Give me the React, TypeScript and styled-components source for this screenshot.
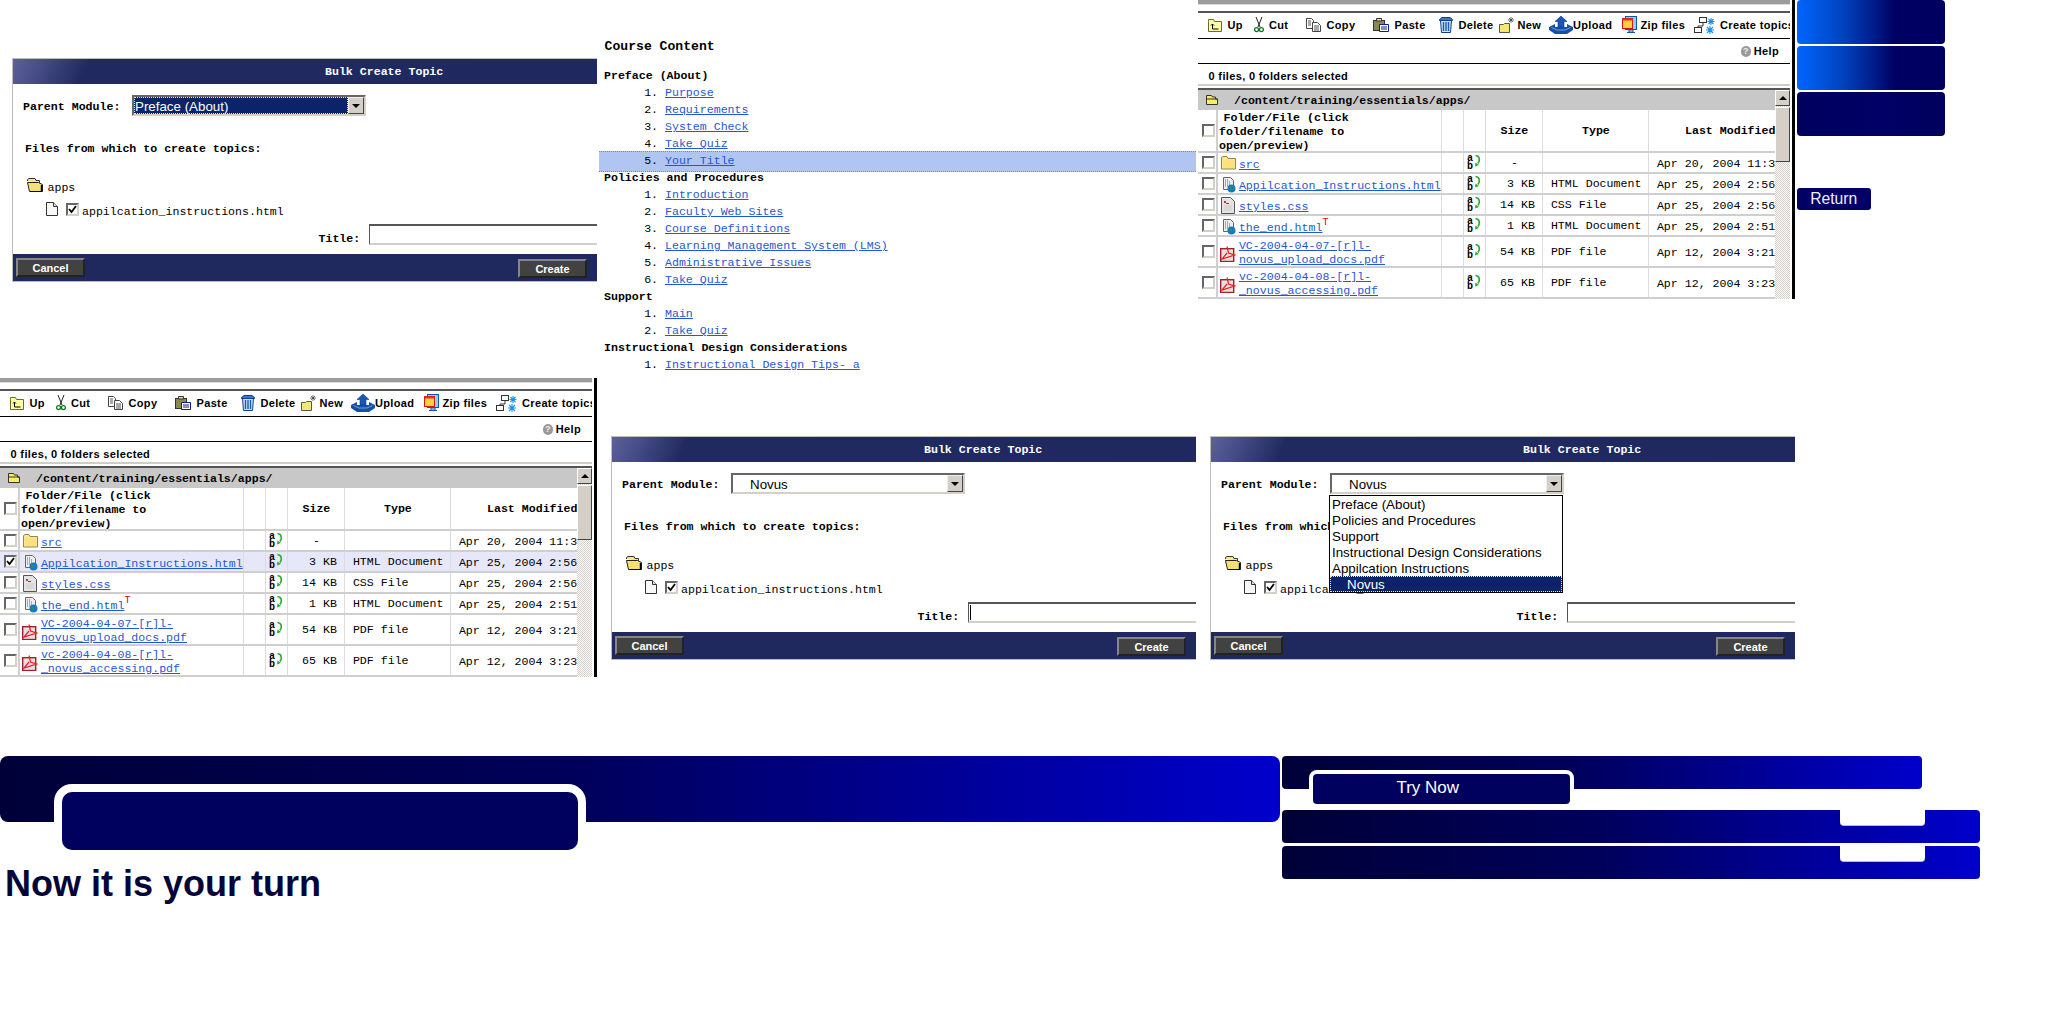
import React from 'react';
import styled, { createGlobalStyle } from 'styled-components';

const Global = createGlobalStyle`
  html, body { margin: 0; padding: 0; background: #fff; }
  #root { width: 2048px; height: 1024px; overflow: hidden; }
`;

const MONO = `"Liberation Mono", "Courier New", monospace`;
const SANS = `"Liberation Sans", Arial, sans-serif`;

const Canvas = styled.div`
  position: relative;
  width: 2048px;
  height: 1024px;
  background: #fff;
  overflow: hidden;
  font-family: ${MONO};
  font-size: 11.6px;
  color: #000;
`;

/* each captured picture is a window placed freely on the canvas */
const Placed = styled.div<{ $x: number; $y: number }>`
  position: absolute;
  left: ${p => p.$x}px;
  top: ${p => p.$y}px;
`;

/* ---------- Icons ---------- */
const FolderUpIcon = () => (
  <svg width="14" height="13" viewBox="0 0 14 13">
    <path d="M.5 2.5V.5h5l1 2h7v10H.5z" fill="#ffffa8" stroke="#6a6a20" />
    <path d="M4.5 5v5h6M3 6.5 4.5 5 6 6.5" stroke="#000" fill="none" />
  </svg>
);
const ScissorsIcon = () => (
  <svg width="10" height="16" viewBox="0 0 10 16">
    <path d="M2 0l4 10M8 0 4 10" stroke="#222" fill="none" />
    <circle cx="2.6" cy="12.6" r="2" stroke="#0a7a18" strokeWidth="1.3" fill="#fff" />
    <circle cx="7.4" cy="12.6" r="2" stroke="#0a7a18" strokeWidth="1.3" fill="#fff" />
  </svg>
);
const CopyIcon = () => (
  <svg width="15" height="14" viewBox="0 0 15 14">
    <path d="M.5.5h5l2 2v8H.5z" fill="#fff" stroke="#444" />
    <path d="M6.5 4.5h5l3 3v6h-8z" fill="#fff" stroke="#444" />
    <path d="M2 3h3M2 5h3M2 7h3M8 8h5M8 10h5M8 12h5" stroke="#555" />
  </svg>
);
const PasteIcon = () => (
  <svg width="16" height="14" viewBox="0 0 16 14">
    <rect x=".5" y="2.5" width="11" height="10" fill="#8a8a50" stroke="#333" />
    <path d="M3.5 3V.5h5V3z" fill="#f0e080" stroke="#333" />
    <path d="M6.5 6.5h9v7h-9z" fill="#fff" stroke="#0a1a90" />
    <path d="M8 9h6M8 11h6" stroke="#0a1a90" />
  </svg>
);
const TrashIcon = () => (
  <svg width="14" height="16" viewBox="0 0 14 16">
    <path d="M.5 2.5 3 .5h8l2.5 2v1H.5z" fill="#3a78c8" stroke="#0d3f88" />
    <path d="M1.5 3.5h11l-1 12h-9z" fill="#cfe0f6" stroke="#0d3f88" />
    <path d="M4.5 5v9M7 5v9M9.5 5v9" stroke="#1c5cb0" strokeWidth="1.4" />
  </svg>
);
const NewIcon = () => (
  <svg width="16" height="16" viewBox="0 0 16 16">
    <path d="M.5 7.5h4l1-1h5v9h-10z" fill="#f2ea70" stroke="#555" />
    <path d="M12 0v6M9 3h6M10 1l4 4M14 1l-4 4" stroke="#333" strokeWidth=".7" />
  </svg>
);
const UploadIcon = () => (
  <svg width="24" height="18" viewBox="0 0 24 18">
    <path d="M0 11l6-3v3h12V8l6 3v3l-6 4H6l-6-4z" fill="#164fa6" />
    <path d="M2.5 11.500 8 14h8l5.500-2.500" stroke="#6f9fdc" fill="none" />
    <path d="M12 0l6 5.500h-3V11H9V5.500H6z" fill="#1a58b4" stroke="#0d3a84" strokeWidth=".6" />
  </svg>
);
const ZipIcon = () => (
  <svg width="15" height="18" viewBox="0 0 15 18">
    <rect x="3.5" y=".5" width="11" height="13" fill="#8ed0f0" stroke="#0a5aa8" />
    <rect x=".5" y="2.5" width="10" height="10" fill="#ffd040" stroke="#d01818" />
    <path d="M.5 2.5h10v2H.5z" fill="#e83020" />
    <path d="M7 14h4v2H7zM5 16.500h8" stroke="#0a5aa8" fill="none" />
  </svg>
);
const CreateIcon = () => (
  <svg width="22" height="17" viewBox="0 0 22 17">
    <rect x="5.5" y=".5" width="7" height="5" fill="#fff" stroke="#333" />
    <rect x=".5" y="10.500" width="7" height="5" fill="#fff" stroke="#333" />
    <path d="M9 6v3H4v1" stroke="#333" fill="none" />
    <path d="M17 1v7M13.500 4.500h7M14.500 2l5 5M19.500 2l-5 5M16 9v8M12 13h8M13 10l6 6M19 10l-6 6" stroke="#1a90f0" strokeWidth="1.1" />
  </svg>
);
const HelpIconBox = styled.span`
  display: inline-flex;
  width: 10px;
  height: 11px;
  border-radius: 5px;
  align-items: center;
  justify-content: center;
  background: #9a9a9a;
  color: #eee;
  font: bold 9px ${SANS};
  letter-spacing: 0;
`;
const FolderOpenIcon = () => (
  <svg width="16" height="14" viewBox="0 0 16 14">
    <path d="M.5 3V1.500L2 .5h6l1 2h3.500V5" fill="#f6e68a" stroke="#333" />
    <path d="M.5 4.500h11l4 2v7H2.500z" fill="#f5e070" stroke="#222" />
    <path d="M14.500 7v7H3" stroke="#000" fill="none" strokeWidth="1.400" />
  </svg>
);
const SmallOpenFolderIcon = () => (
  <svg width="12" height="10" viewBox="0 0 12 10">
    <path d="M.5 2V.5h5l1 1.500h3v2h2v5.500h-11z" fill="#f7ee60" stroke="#333" />
    <path d="M.5 4h11" stroke="#333" />
  </svg>
);
const FolderClosedIcon = () => (
  <svg width="15" height="14" viewBox="0 0 15 14">
    <path d="M.5 13V1.500L2 .5h4l1 2h7.500V13z" fill="#fde890" stroke="#8a8a50" />
    <path d="M2 4h11v8H2z" fill="#ffdf80" />
  </svg>
);
const DocIcon = () => (
  <svg width="12" height="14" viewBox="0 0 12 14">
    <path d="M.5.5h7l4 4v9H.5z" fill="#f8f8f8" stroke="#333" />
    <path d="M7.500.5v4h4" fill="#ddd" stroke="#333" />
  </svg>
);
const HtmlIcon = () => (
  <svg width="15" height="16" viewBox="0 0 15 16">
    <path d="M2.500.5h7l3 3v9h-10z" fill="#eee" stroke="#666" />
    <path d="M4 3h4M4 5h6M4 7h6M4 9h6" stroke="#666" strokeDasharray="1 1" />
    <circle cx="10.500" cy="11.500" r="4" fill="#1878c8" />
    <path d="M8 9.500l3 1-1 3zM12 9l2 2-2 1z" fill="#2c9a40" />
  </svg>
);
const CssIcon = () => (
  <svg width="14" height="17" viewBox="0 0 14 17">
    <path d="M.5.5h9l4 4v12H.5z" fill="#e4e4e4" stroke="#555" />
    <rect x="3" y="4" width="2" height="2" fill="#c03060" />
    <rect x="5" y="6" width="3" height="1" fill="#3050c0" />
    <path d="M3 9h8M3 11h8M3 13h8" stroke="#ccc" />
  </svg>
);
const PdfIcon = () => (
  <svg width="16" height="16" viewBox="0 0 16 16">
    <rect x=".7" y="2.700" width="13" height="12.800" fill="#e8e0e0" stroke="#a02028" strokeWidth="1.400" />
    <path d="M7 .5 8.500 7 14.500 9 2 13 7 7" fill="none" stroke="#e81c24" strokeWidth="1.200" />
  </svg>
);
const RenameGlyph = styled.svg`
  display: block;
  font-family: ${MONO};
  font-weight: bold;
`;
const RenameIcon = () => (
  <RenameGlyph width="16" height="16" viewBox="0 0 16 16">
    <text x="0" y="7" fontSize="10" fill="#000">a</text>
    <text x="0" y="14.500" fontSize="10" fill="#000">b</text>
    <path d="M8.500 1.500c4 .5 5 4.500 2.500 8" stroke="#30a838" strokeWidth="1.700" fill="none" />
    <path d="M8.500 8.500l3.500 2.500-4 1.500z" fill="#30a838" />
  </RenameGlyph>
);

/* ---------- Checkbox ---------- */
const Box = styled.span`
  display: inline-flex;
  box-sizing: border-box;
  width: 13px;
  height: 13px;
  flex: none;
  background: #fff;
  border: 2px solid;
  border-color: #666 #d4d0c8 #d4d0c8 #666;
  align-items: center;
  justify-content: center;
`;
const Check = ({ on }: { on?: boolean }) => (
  <Box>
    {on && (
      <svg width="9" height="9" viewBox="0 0 9 9">
        <path d="M1 4l2.500 3L8 1" stroke="#000" strokeWidth="1.800" fill="none" />
      </svg>
    )}
  </Box>
);

/* ---------- File browser ---------- */
const Browser = styled.div`
  position: relative;
  width: 592px;
  height: 299px;
  display: flex;
  flex-direction: column;
  overflow: hidden;
`;
const TopStrip = styled.div`
  height: 13px;
  box-sizing: border-box;
  border-top: 4px solid #9c9c9c;
  border-bottom: 2px solid #555;
  box-shadow: inset 0 1px 0 #ddd;
  background: #fff;
  flex: none;
`;
const Toolbar = styled.div`
  height: 26px;
  box-sizing: border-box;
  border-bottom: 1px solid #000;
  display: flex;
  align-items: center;
  padding: 0 0 1px 9.5px;
  flex: none;
  white-space: nowrap;
`;
const ToolItem = styled.span<{ $w: number; $gap: number }>`
  display: inline-flex;
  align-items: center;
  flex: none;
  width: ${p => p.$w}px;
  gap: ${p => p.$gap}px;
  font: bold 11px ${SANS};
  letter-spacing: 0.35px;
`;
const HelpRow = styled.div`
  height: 25px;
  box-sizing: border-box;
  border-bottom: 1px solid #000;
  display: flex;
  align-items: center;
  justify-content: flex-end;
  gap: 3px;
  padding-right: 11px;
  font: bold 11px ${SANS};
  letter-spacing: 0.35px;
  flex: none;
`;
const StatusRow = styled.div`
  height: 20px;
  padding: 3px 0 0 10.5px;
  box-sizing: border-box;
  display: flex;
  align-items: center;
  font: bold 11px ${SANS};
  letter-spacing: 0.35px;
  flex: none;
`;
const StatusRule = styled.div`
  height: 6px;
  box-sizing: border-box;
  border-top: 2px solid #cfcdc6;
  border-bottom: 2px solid #555;
  flex: none;
`;
const TableWrap = styled.div`
  display: flex;
  flex: none;
  height: 209px;
`;
const TableArea = styled.div`
  width: 577px;
  flex: none;
  overflow: hidden;
`;
const PathRow = styled.div`
  height: 20px;
  background: #c8c8c8;
  display: flex;
  align-items: center;
  padding-left: 8px;
  gap: 16px;
  font-weight: bold;
`;
const Row = styled.div<{ $h: number; $sel?: boolean }>`
  width: 600px;
  display: grid;
  grid-template-columns: 20.4px 224px 22px 22px 57px 106px 149px;
  height: ${p => p.$h}px;
  box-sizing: border-box;
  border-bottom: 2px solid #cfcfcf;
  background: ${p => (p.$sel ? '#e6e8fa' : '#fff')};
`;
const Cell = styled.div`
  box-sizing: border-box;
  border-right: 1px solid #dcdcdc;
  display: flex;
  align-items: center;
  min-width: 0;
  white-space: nowrap;
  overflow: hidden;
`;
const CheckCell = styled(Cell)`
  padding-left: 4px;
  border-right: 2px solid #cfcfcf;
`;
const NameCell = styled(Cell)<{ $tall?: boolean }>`
  padding: ${p => (p.$tall ? 2 : 1)}px 0 0 1.5px;
  gap: 2px;
  align-items: ${p => (p.$tall ? 'flex-start' : 'flex-end')};
`;
const IconSlot = styled.span<{ $top: number }>`
  width: 17px;
  flex: none;
  display: flex;
  justify-content: center;
  align-self: flex-start;
  margin-top: ${p => p.$top}px;
`;
const FileLink = styled.a`
  color: #1f57d6;
  text-decoration: underline;
  line-height: 14px;
  white-space: pre;
  display: block;
`;
const Sup = styled.span`
  color: #e00000;
  font-size: 10px;
  line-height: 10px;
  align-self: flex-start;
  margin: 1px 0 0 -2px;
`;
const RenameCell = styled(Cell)`
  padding: 0 0 1px 3px;
`;
const SizeCell = styled(Cell)<{ $dash?: boolean }>`
  justify-content: ${p => (p.$dash ? 'center' : 'flex-end')};
  padding-right: ${p => (p.$dash ? 0 : 7.5)}px;
`;
const TypeCell = styled(Cell)`
  padding-left: 7.5px;
`;
const DateCell = styled(Cell)`
  padding: 2.5px 0 0 7.5px;
  border-right: none;
`;
const HeadName = styled(Cell)`
  font-weight: bold;
  white-space: normal;
  line-height: 14px;
  padding: 0.5px 0 0 0.6px;
  display: block;
  text-indent: 4.5px;
`;
const HeadCell = styled(Cell)`
  font-weight: bold;
  justify-content: center;
`;
const HeadLast = styled(HeadCell)`
  justify-content: flex-start;
  padding-left: 35.6px;
  border-right: none;
`;
const Scroll = styled.div`
  width: 15px;
  flex: none;
  display: flex;
  flex-direction: column;
  background: repeating-conic-gradient(#d4d0c8 0 25%, #fff 0 50%) 0 0 / 2px 2px;
`;
const ScrollBtn = styled.div`
  box-sizing: border-box;
  height: 16px;
  background: #d4d0c8;
  border: 1px solid;
  border-color: #fff #444 #444 #fff;
  display: flex;
  align-items: center;
  justify-content: center;
  margin-bottom: 1px;
`;
const ScrollThumb = styled.div`
  box-sizing: border-box;
  height: 55px;
  background: #d4d0c8;
  border: 1px solid;
  border-color: #fff #444 #444 #fff;
`;
const Arrow = styled.span`
  width: 0;
  height: 0;
  border: 4px solid transparent;
  border-top: 0;
  border-bottom: 4px solid #000;
`;
const EdgeLine = styled.div`
  width: 3px;
  height: 299px;
  background: #000;
`;
const BrowserFrame = styled.div`
  display: flex;
  gap: 2px;
`;

const tools = [
  { icon: <FolderUpIcon />, label: 'Up', w: 46.5, gap: 6 },
  { icon: <ScissorsIcon />, label: 'Cut', w: 52, gap: 5 },
  { icon: <CopyIcon />, label: 'Copy', w: 67, gap: 5.5 },
  { icon: <PasteIcon />, label: 'Paste', w: 66, gap: 5.5 },
  { icon: <TrashIcon />, label: 'Delete', w: 60, gap: 5.4 },
  { icon: <NewIcon />, label: 'New', w: 50, gap: 2.5 },
  { icon: <UploadIcon />, label: 'Upload', w: 73, gap: 0 },
  { icon: <ZipIcon />, label: 'Zip files', w: 72, gap: 3.5 },
  { icon: <CreateIcon />, label: 'Create topics', w: 110, gap: 4 },
];

type FileRow = {
  icon: React.ReactNode;
  top: number;
  name: string;
  size: string;
  type: string;
  date: string;
  tall?: boolean;
  mark?: boolean;
};
const files: FileRow[] = [
  { icon: <FolderClosedIcon />, top: 2, name: 'src', size: '-', type: '', date: 'Apr 20, 2004 11:3' },
  { icon: <HtmlIcon />, top: 2, name: 'Appilcation_Instructions.html', size: '3 KB', type: 'HTML Document', date: 'Apr 25, 2004 2:56' },
  { icon: <CssIcon />, top: 1, name: 'styles.css', size: '14 KB', type: 'CSS File', date: 'Apr 25, 2004 2:56' },
  { icon: <HtmlIcon />, top: 2, name: 'the_end.html', size: '1 KB', type: 'HTML Document', date: 'Apr 25, 2004 2:51', mark: true },
  { icon: <PdfIcon />, top: 7, name: 'VC-2004-04-07-[r]l-\nnovus_upload_docs.pdf', size: '54 KB', type: 'PDF file', date: 'Apr 12, 2004 3:21', tall: true },
  { icon: <PdfIcon />, top: 7, name: 'vc-2004-04-08-[r]l-\n_novus_accessing.pdf', size: '65 KB', type: 'PDF file', date: 'Apr 12, 2004 3:23', tall: true },
];

const FileBrowser = ({ selected }: { selected?: number }) => (
  <BrowserFrame>
    <Browser>
      <TopStrip />
      <Toolbar>
        {tools.map(t => (
          <ToolItem key={t.label} $w={t.w} $gap={t.gap}>
            {t.icon}
            {t.label}
          </ToolItem>
        ))}
      </Toolbar>
      <HelpRow>
        <HelpIconBox>?</HelpIconBox>
        Help
      </HelpRow>
      <StatusRow>0 files, 0 folders selected</StatusRow>
      <StatusRule />
      <TableWrap>
        <TableArea>
          <PathRow>
            <SmallOpenFolderIcon />
            /content/training/essentials/apps/
          </PathRow>
          <Row $h={43}>
            <CheckCell><Check /></CheckCell>
            <HeadName>Folder/File (click folder/filename to open/preview)</HeadName>
            <Cell />
            <Cell />
            <HeadCell>Size</HeadCell>
            <HeadCell>Type</HeadCell>
            <HeadLast>Last Modified</HeadLast>
          </Row>
          {files.map((f, i) => (
            <Row key={f.name} $h={f.tall ? 31 : 21} $sel={selected === i}>
              <CheckCell><Check on={selected === i} /></CheckCell>
              <NameCell $tall={f.tall}>
                <IconSlot $top={f.top}>{f.icon}</IconSlot>
                <FileLink href="#">{f.name}</FileLink>
                {f.mark && <Sup>T</Sup>}
              </NameCell>
              <Cell />
              <RenameCell><RenameIcon /></RenameCell>
              <SizeCell $dash={f.size === '-'}>{f.size}</SizeCell>
              <TypeCell>{f.type}</TypeCell>
              <DateCell>{f.date}</DateCell>
            </Row>
          ))}
        </TableArea>
        <Scroll>
          <ScrollBtn><Arrow /></ScrollBtn>
          <ScrollThumb />
        </Scroll>
      </TableWrap>
    </Browser>
    <EdgeLine />
  </BrowserFrame>
);

/* ---------- Bulk create dialog ---------- */
const Dialog = styled.div`
  width: 585px;
  box-sizing: border-box;
  border: 1px solid #bdbdbd;
  border-right: none;
  display: flex;
  flex-direction: column;
  overflow: hidden;
  background: #fff;
`;
const DialogHead = styled.div`
  height: 25px;
  flex: none;
  display: flex;
  align-items: center;
  padding-left: 312px;
  font-weight: bold;
  color: #fff;
  background: linear-gradient(115deg, #5d6199 0, #454c86 28px, #212a60 70px, #20295f 100%);
`;
const DialogBody = styled.div`
  height: 170px;
  flex: none;
  display: flex;
  flex-direction: column;
  font-weight: bold;
`;
const ModuleRow = styled.div`
  position: relative;
  display: flex;
  align-items: center;
  margin: 11px 0 0 10px;
  height: 21px;
  flex: none;
`;
const ModuleLabel = styled.span`
  width: 109px;
  flex: none;
  padding-top: 1px;
`;
const Select = styled.div`
  box-sizing: border-box;
  width: 233.5px;
  height: 21px;
  border: 2px solid;
  border-color: #666 #d4d0c8 #d4d0c8 #666;
  display: flex;
  background: #fff;
  font: 13.33px ${SANS};
`;
const SelectValue = styled.div<{ $focus?: boolean; $indent?: boolean }>`
  flex: 1;
  box-sizing: border-box;
  display: flex;
  align-items: center;
  padding: 1px 0 0 ${p => (p.$indent ? 17 : 1)}px;
  background: ${p => (p.$focus ? '#0a246a' : '#fff')};
  color: ${p => (p.$focus ? '#fff' : '#000')};
  outline: ${p => (p.$focus ? '1px dotted #ffe9a0' : 'none')};
  outline-offset: -1px;
`;
const SelectButton = styled.div`
  box-sizing: border-box;
  width: 16px;
  background: #d4d0c8;
  border: 1px solid;
  border-color: #eee #444 #444 #eee;
  display: flex;
  align-items: center;
  justify-content: center;
`;
const DownArrow = styled.span`
  width: 0;
  height: 0;
  border: 4px solid transparent;
  border-bottom: 0;
  border-top: 4px solid #000;
`;
const Popup = styled.div`
  position: absolute;
  z-index: 2;
  left: 108px;
  top: 22px;
  width: 234px;
  box-sizing: border-box;
  border: 1px solid #000;
  background: #fff;
  font: 13.33px ${SANS};
  display: flex;
  flex-direction: column;
`;
const PopupItem = styled.div<{ $active?: boolean }>`
  height: 16px;
  line-height: 17px;
  padding-left: ${p => (p.$active ? 17 : 2)}px;
  background: ${p => (p.$active ? '#0a246a' : '#fff')};
  color: ${p => (p.$active ? '#fff' : '#000')};
  font-weight: normal;
  white-space: nowrap;
  outline: ${p => (p.$active ? '1px dotted #ffe9a0' : 'none')};
  outline-offset: -1px;
`;
const FilesHeading = styled.div`
  margin: 26px 0 0 12px;
  line-height: 14px;
  flex: none;
`;
const TreeFolder = styled.div`
  display: flex;
  align-items: center;
  margin: 22px 0 0 13.5px;
  gap: 5px;
  height: 14px;
  font-weight: normal;
  flex: none;
`;
const TreeApps = styled.span`
  padding-top: 5px;
`;
const TreeFile = styled.div`
  display: flex;
  align-items: center;
  margin: 10px 0 0 33px;
  height: 14px;
  font-weight: normal;
  flex: none;
`;
const TreeFileName = styled.span`
  margin-left: 3.5px;
  padding-top: 4px;
  white-space: nowrap;
`;
const TreeCheck = styled.span`
  margin-left: 7.5px;
  display: flex;
`;
const TitleRow = styled.div`
  display: flex;
  align-items: center;
  margin: 8px 0 0 305.5px;
  height: 21px;
  flex: none;
`;
const TitleLabel = styled.span`
  width: 50px;
  flex: none;
  padding-top: 8px;
`;
const TitleInput = styled.div`
  box-sizing: border-box;
  width: 240px;
  height: 21px;
  flex: none;
  border: 2px solid;
  border-color: #555 #d4d0c8 #d4d0c8 #555;
  border-left-width: 1px;
  display: flex;
  align-items: center;
  padding-left: 1px;
`;
const Caret = styled.span`
  width: 1px;
  height: 15px;
  background: #000;
`;
const DialogFoot = styled.div`
  height: 27px;
  box-sizing: border-box;
  flex: none;
  background: #1f295e;
  display: flex;
  justify-content: space-between;
  align-items: flex-start;
  padding: 4px 10px 0 3px;
`;
const DialogBtn = styled.div<{ $low?: boolean }>`
  box-sizing: border-box;
  width: 69px;
  height: 19px;
  margin-top: ${p => (p.$low ? 1 : 0)}px;
  background: #424242;
  border: 2px solid;
  border-color: #868686 #222 #222 #868686;
  display: flex;
  align-items: center;
  justify-content: center;
  color: #fff;
  font: bold 11px ${SANS};
`;

const options = [
  'Preface (About)',
  'Policies and Procedures',
  'Support',
  'Instructional Design Considerations',
  'Appilcation Instructions',
];

type BulkProps = { value: string; focus?: boolean; indent?: boolean; open?: boolean; caret?: boolean };
const BulkDialog = ({ value, focus, indent, open, caret }: BulkProps) => (
  <Dialog>
    <DialogHead>Bulk Create Topic</DialogHead>
    <DialogBody>
      <ModuleRow>
        <ModuleLabel>Parent Module:</ModuleLabel>
        <Select>
          <SelectValue $focus={focus} $indent={indent}>{value}</SelectValue>
          <SelectButton><DownArrow /></SelectButton>
        </Select>
        {open && (
          <Popup>
            {options.map(o => <PopupItem key={o}>{o}</PopupItem>)}
            <PopupItem $active>Novus</PopupItem>
          </Popup>
        )}
      </ModuleRow>
      <FilesHeading>Files from which to create topics:</FilesHeading>
      <TreeFolder>
        <FolderOpenIcon />
        <TreeApps>apps</TreeApps>
      </TreeFolder>
      <TreeFile>
        <DocIcon />
        <TreeCheck><Check on /></TreeCheck>
        <TreeFileName>appilcation_instructions.html</TreeFileName>
      </TreeFile>
      <TitleRow>
        <TitleLabel>Title:</TitleLabel>
        <TitleInput>{caret && <Caret />}</TitleInput>
      </TitleRow>
    </DialogBody>
    <DialogFoot>
      <DialogBtn>Cancel</DialogBtn>
      <DialogBtn $low>Create</DialogBtn>
    </DialogFoot>
  </Dialog>
);

/* ---------- Course outline ---------- */
const Outline = styled.div`
  width: 600px;
  line-height: 17px;
  isolation: isolate;
`;
const OutlineTitle = styled.div`
  font-size: 13.1px;
  font-weight: bold;
  margin: 0 0 12.7px 0.6px;
`;
const OutlineHeading = styled.div`
  font-weight: bold;
`;
const OutlineList = styled.ol`
  margin: 0;
  padding: 0 0 0 61px;
`;
const OutlineItem = styled.li<{ $hl?: boolean }>`
  position: relative;
  height: 17px;
  ${p =>
    p.$hl
      ? `&::before {
    content: '';
    position: absolute;
    z-index: -1;
    left: -66px;
    top: -1px;
    width: 597px;
    height: 21px;
    box-sizing: border-box;
    background: #b1c5f2;
    border-top: 1px dotted #888;
    border-bottom: 1px dotted #888;
  }`
      : ''}
`;
const OutlineLink = styled.a`
  color: #1f57d6;
  text-decoration: underline;
`;

const outline = [
  { title: 'Preface (About)', items: ['Purpose', 'Requirements', 'System Check', 'Take Quiz', 'Your Title'] },
  { title: 'Policies and Procedures', items: ['Introduction', 'Faculty Web Sites', 'Course Definitions', 'Learning Management System (LMS)', 'Administrative Issues', 'Take Quiz'] },
  { title: 'Support', items: ['Main', 'Take Quiz'] },
  { title: 'Instructional Design Considerations', items: ['Instructional Design Tips- a'] },
];

/* ---------- Blue artwork ---------- */
const BlueStack = styled.div`
  width: 148.5px;
  display: flex;
  flex-direction: column;
  gap: 2px;
`;
const BlueButton = styled.div<{ $dark?: boolean }>`
  height: 44px;
  border-radius: 4px;
  background: ${p =>
    p.$dark
      ? 'linear-gradient(90deg, #00005e 0, #000066 60%, #00005c 100%)'
      : 'linear-gradient(90deg, #0066ff 0, #0044c0 30%, #002090 50%, #000062 66%, #000060 100%)'};
`;
const ReturnButton = styled.div`
  margin-top: 50px;
  width: 74.5px;
  height: 22px;
  border-radius: 3px;
  background: #000066;
  color: #eeeefa;
  font: 15.7px/22px ${SANS};
  text-align: center;
`;
const BAR = 'linear-gradient(90deg, #000038 0, #00005a 45%, #0000cc 100%)';
const Banner = styled.div`
  width: 700px;
`;
const BigBar = styled.div`
  position: relative;
  width: 1280px;
  height: 66px;
  border-radius: 8px;
  background: ${BAR};
`;
const BigTab = styled.div`
  position: absolute;
  left: 54px;
  top: 27.5px;
  width: 516px;
  height: 58px;
  border: 8px solid #fff;
  border-radius: 18px;
  background: #00005e;
`;
const TurnHeading = styled.h1`
  margin: 40px 0 0 5px;
  font: bold 36px/44px ${SANS};
  color: #05053a;
  white-space: nowrap;
`;
const SideBars = styled.div`
  display: flex;
  flex-direction: column;
  align-items: flex-start;
`;
const TopBar = styled.div`
  position: relative;
  width: 640px;
  height: 33px;
  border-radius: 4px;
  background: ${BAR};
`;
const TryTab = styled.div`
  position: absolute;
  left: 26.5px;
  top: 13.5px;
  width: 230.5px;
  padding-right: 27px;
  height: 30px;
  border: 4px solid #fff;
  border-radius: 8px;
  background: #00005e;
  color: #fff;
  font: 17px/28px ${SANS};
  text-align: center;
`;
const NotchBar = styled.div<{ $top: number }>`
  position: relative;
  width: 698px;
  height: 33px;
  margin-top: ${p => p.$top}px;
  border-radius: 4px;
  background: ${BAR};
`;
const Notch = styled.div`
  position: absolute;
  right: 55px;
  top: 0;
  width: 85px;
  height: 16px;
  box-sizing: border-box;
  background: #fff;
  border-bottom: 1px solid #b8b8d0;
  border-radius: 0 0 4px 4px;
`;

export default function App() {
  return (
    <>
      <Global />
      <Canvas>
        <Placed $x={12} $y={58}>
          <BulkDialog value="Preface (About)" focus />
        </Placed>
        <Placed $x={604} $y={37.5}>
          <Outline>
            <OutlineTitle>Course Content</OutlineTitle>
            {outline.map(s => (
              <React.Fragment key={s.title}>
                <OutlineHeading>{s.title}</OutlineHeading>
                <OutlineList>
                  {s.items.map(it => (
                    <OutlineItem key={it} $hl={it === 'Your Title'}>
                      <OutlineLink href="#">{it}</OutlineLink>
                    </OutlineItem>
                  ))}
                </OutlineList>
              </React.Fragment>
            ))}
          </Outline>
        </Placed>
        <Placed $x={1198} $y={0}>
          <FileBrowser />
        </Placed>
        <Placed $x={1796.5} $y={0}>
          <BlueStack>
            <BlueButton />
            <BlueButton />
            <BlueButton $dark />
            <ReturnButton>Return</ReturnButton>
          </BlueStack>
        </Placed>
        <Placed $x={0} $y={378}>
          <FileBrowser selected={1} />
        </Placed>
        <Placed $x={611} $y={436}>
          <BulkDialog value="Novus" indent caret />
        </Placed>
        <Placed $x={1210} $y={436}>
          <BulkDialog value="Novus" indent open />
        </Placed>
        <Placed $x={0} $y={756}>
          <Banner>
            <BigBar>
              <BigTab />
            </BigBar>
            <TurnHeading>Now it is your turn</TurnHeading>
          </Banner>
        </Placed>
        <Placed $x={1282} $y={756}>
          <SideBars>
            <TopBar>
              <TryTab>Try Now</TryTab>
            </TopBar>
            <NotchBar $top={21}>
              <Notch />
            </NotchBar>
            <NotchBar $top={3}>
              <Notch />
            </NotchBar>
          </SideBars>
        </Placed>
      </Canvas>
    </>
  );
}
